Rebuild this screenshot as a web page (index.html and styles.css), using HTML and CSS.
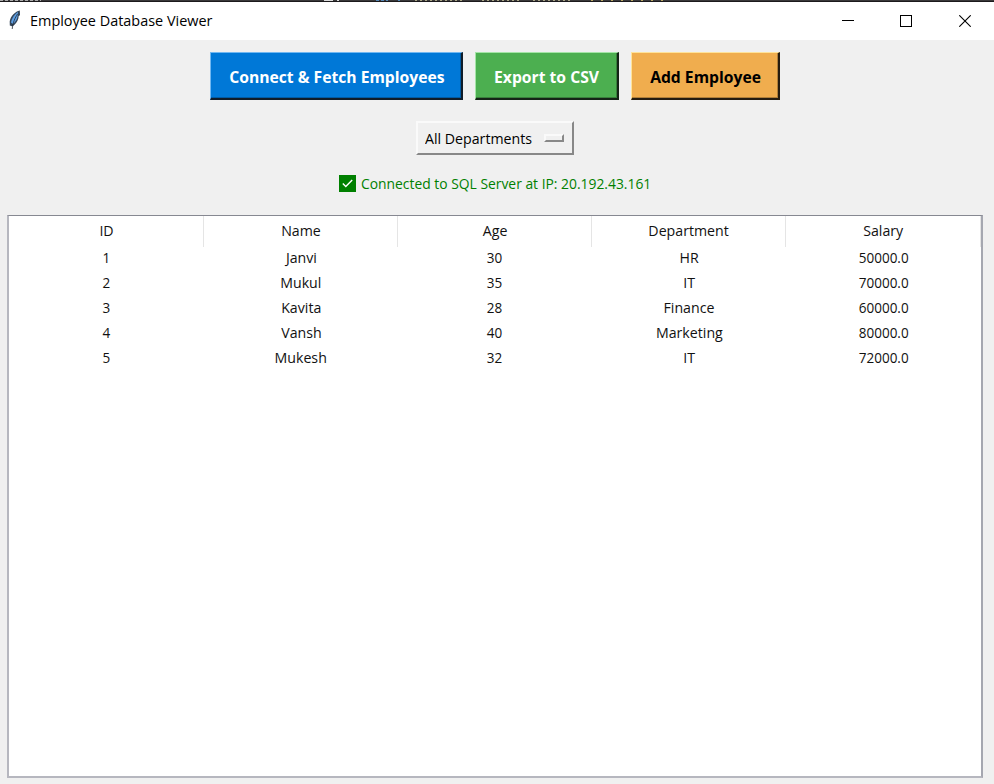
FILE: index.html
```html
<!DOCTYPE html>
<html lang="en">
<head>
<meta charset="utf-8">
<title>Employee Database Viewer</title>
<link rel="stylesheet" href="styles.css">
</head>
<body>
<div class="window">
  <div class="backdrop">
    <svg width="994" height="2" viewBox="0 0 994 2">
      <path d="M0 .5h41" stroke="#aaa" stroke-dasharray="3 2"/>
      <path d="M324 .5h9M337 .5h2" stroke="#ddd"/>
      <path d="M376 .5h12M398 .5h2" stroke="#5688b8" stroke-dasharray="3 2"/>
      <path d="M415 .5h50M482 .5h40M533 .5h40" stroke="#aaa686" stroke-dasharray="2 3"/>
      <path d="M591 .5h80" stroke="#b9a764" stroke-dasharray="2 8"/>
    </svg>
  </div>
  <header class="titlebar">
    <svg class="feather" width="14" height="20" viewBox="0 0 14 20">
      <path d="M11.800 .5C7.500 1.500 2.500 6 1.700 11.500L1.800 15.500L4.500 16.500C8 13.500 9.500 11.500 10.500 8L10.500 6.500L12 5Z" fill="#34465a"/>
      <path d="M10 2C7 4 3.800 8 3 12.500L4.800 14C7.800 11.500 9.200 9 9.500 6.500Z" fill="#5d9ee3"/>
      <path d="M9.500 4C7 8 5 12 4.200 19" fill="none" stroke="#222b36" stroke-width=".8"/>
    </svg>
    <h1 class="title"><span class="t t-title">Employee Database Viewer</span></h1>
    <div class="controls">
      <svg width="12" height="12" viewBox="0 0 12 12"><path d="M0 5.500h12" stroke="#000"/></svg>
      <svg width="12" height="12" viewBox="0 0 12 12"><rect x=".5" y=".5" width="11" height="11" fill="none" stroke="#000"/></svg>
      <svg width="12" height="12" viewBox="0 0 12 12"><path d="M.3 .3L11.700 11.700M11.700 .3L.3 11.700" stroke="#000" stroke-width="1.100"/></svg>
    </div>
  </header>
  <main>
    <div class="actions">
      <button class="btn connect"><span class="t">Connect &amp; Fetch Employees</span></button>
      <button class="btn export"><span class="t">Export to CSV</span></button>
      <button class="btn add"><span class="t">Add Employee</span></button>
    </div>
    <button class="select"><span class="t">All Departments</span><i class="indicator"></i></button>
    <p class="status">
      <svg width="17" height="17" viewBox="0 0 17 17"><rect width="17" height="17" fill="#008000"/><path d="M3.800 8.600L6.800 11.600L13.200 5" fill="none" stroke="#fff" stroke-width="1.400"/></svg>
      <span class="t">Connected to SQL Server at IP: 20.192.43.161</span>
    </p>
    <div class="tree">
      <div class="row head"><div><span class="t">ID</span></div><div><span class="t">Name</span></div><div><span class="t">Age</span></div><div><span class="t">Department</span></div><div><span class="t">Salary</span></div></div>
      <div class="row"><div><span class="t num">1</span></div><div><span class="t">Janvi</span></div><div><span class="t num">30</span></div><div><span class="t">HR</span></div><div><span class="t num">50000.0</span></div></div>
      <div class="row"><div><span class="t num">2</span></div><div><span class="t">Mukul</span></div><div><span class="t num">35</span></div><div><span class="t">IT</span></div><div><span class="t num">70000.0</span></div></div>
      <div class="row"><div><span class="t num">3</span></div><div><span class="t">Kavita</span></div><div><span class="t num">28</span></div><div><span class="t">Finance</span></div><div><span class="t num">60000.0</span></div></div>
      <div class="row"><div><span class="t num">4</span></div><div><span class="t">Vansh</span></div><div><span class="t num">40</span></div><div><span class="t">Marketing</span></div><div><span class="t num">80000.0</span></div></div>
      <div class="row"><div><span class="t num">5</span></div><div><span class="t">Mukesh</span></div><div><span class="t num">32</span></div><div><span class="t">IT</span></div><div><span class="t num">72000.0</span></div></div>
    </div>
  </main>
</div>
</body>
</html>
```
FILE: styles.css
```css
* { box-sizing: border-box; }
body { margin: 0; background: #f0f0f0; color: #000; font: 15px/20px "Open Sans", "Noto Sans", sans-serif; overflow: hidden; }
.window { width: 994px; height: 784px; display: flex; flex-direction: column; }
.t { display: inline-block; white-space: nowrap; transform: scaleX(.945); }
.row .t { color: #111; }
.row .num { transform: scaleX(.9); }
.backdrop { height: 2px; background: linear-gradient(#3a393a 50%, #1c1a1c 50%); }
.backdrop svg, .feather, .controls svg, .status svg { display: block; flex: none; }
.titlebar { height: 38px; background: #fff; display: flex; align-items: center; padding: 0 23px 0 8px; }
.feather { margin-bottom: 2px; }
.title { margin: 0 0 2px 8px; font-size: 15px; font-weight: 400; }
.t-title { transform: scaleX(.962); transform-origin: left; }
.controls { margin-left: auto; display: flex; gap: 46px; }
.controls svg:last-child { margin-left: 1px; }
main { flex: 1; display: flex; flex-direction: column; align-items: center; padding: 12px 11px 6px 7px; }
button { font: inherit; color: inherit; padding: 0; border-radius: 0; display: flex; align-items: center; justify-content: center; }
.actions { display: flex; gap: 12px; }
.btn { height: 48px; padding: 2px 0 0 1px; border: 1px solid; border-width: 1px 2px 2px 1px; font-size: 16px; font-weight: 700; }
.btn .t { transform: scaleX(.98); }
.connect { width: 253px; background: #0078d7; color: #fff; border-color: #71b8f2 #101c28 #101c28 #71b8f2; box-shadow: inset -1px -1px #005ba5; }
.export { width: 144px; background: #4caf50; color: #fff; border-color: #a4e5a7 #142416 #142416 #a4e5a7; box-shadow: inset -1px -1px #38803b; }
.add { width: 149px; padding-left: 2px; background: #f0ad4e; border-color: #ffe39a #251c10 #251c10 #ffe39a; box-shadow: inset -1px -1px #b17f38; }
.select { width: 158px; height: 34px; margin-top: 21px; background: #f0f0f0; border: 2px solid; border-color: #fafafa #888 #888 #fafafa; justify-content: space-between; padding: 0 8px 0 7px; }
.select .t { transform-origin: left; }
.indicator { width: 20px; height: 8px; border: 2px solid; border-color: #fafafa #888 #888 #fafafa; flex: none; }
.status { margin: 17px 0 0; height: 22px; color: #008000; display: flex; align-items: center; gap: 5px; width: 312px; }
.status .t { transform: scaleX(.924); transform-origin: left; }
.tree { margin-top: 21px; width: 976px; height: 563px; background: #fff; border: 2px solid #b6b7bf; border-top: 1px solid #868891; border-right-color: #a5a7b0; }
.row { display: grid; grid-template-columns: 195px 194px 194px 194px 1fr; height: 25px; align-items: center; text-align: center; }
.head { height: 28px; align-items: start; }
.head div { height: 31px; line-height: 29px; padding-left: 1px; border-right: 1px solid #e5e5e5; }
```
